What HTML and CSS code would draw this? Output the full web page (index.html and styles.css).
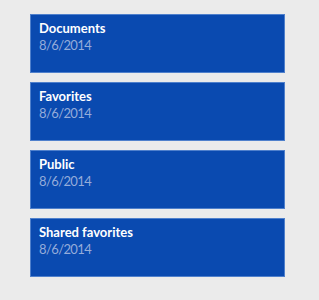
FILE: index.html
```html
<!DOCTYPE html>
<html lang="en">
<head>
    <meta charset="UTF-8">
    <meta name="viewport" content="width=device-width, initial-scale=1.0">
    <title>Folders</title>
    <link rel="stylesheet" href="styles.css">
</head>
<body>
    <div class="list">
        <div class="tile">
            <div class="name">Documents</div>
            <div class="date">8/6/2014</div>
        </div>
        <div class="tile">
            <div class="name">Favorites</div>
            <div class="date">8/6/2014</div>
        </div>
        <div class="tile">
            <div class="name">Public</div>
            <div class="date">8/6/2014</div>
        </div>
        <div class="tile">
            <div class="name">Shared favorites</div>
            <div class="date">8/6/2014</div>
        </div>
    </div>
</body>
</html>
```

FILE: styles.css
```css
body {
    margin: 0;
    background: #ebebeb;
    font-family: Lato, "Open Sans", sans-serif;
}
.list {
    display: flex;
    flex-direction: column;
    gap: 9px;
    padding: 14px 0 0 30px;
}
.tile {
    box-sizing: border-box;
    width: 255px;
    height: 59px;
    background: #0a4ab0;
    border: 1px solid #4f80cc;
    padding: 5px 8px;
}
.name {
    color: #ffffff;
    font-size: 13px;
    font-weight: 700;
    line-height: 16px;
}
.date {
    margin-top: 1px;
    color: #95acda;
    font-size: 13px;
    font-weight: 400;
    line-height: 17px;
    letter-spacing: -0.6px;
}
```
